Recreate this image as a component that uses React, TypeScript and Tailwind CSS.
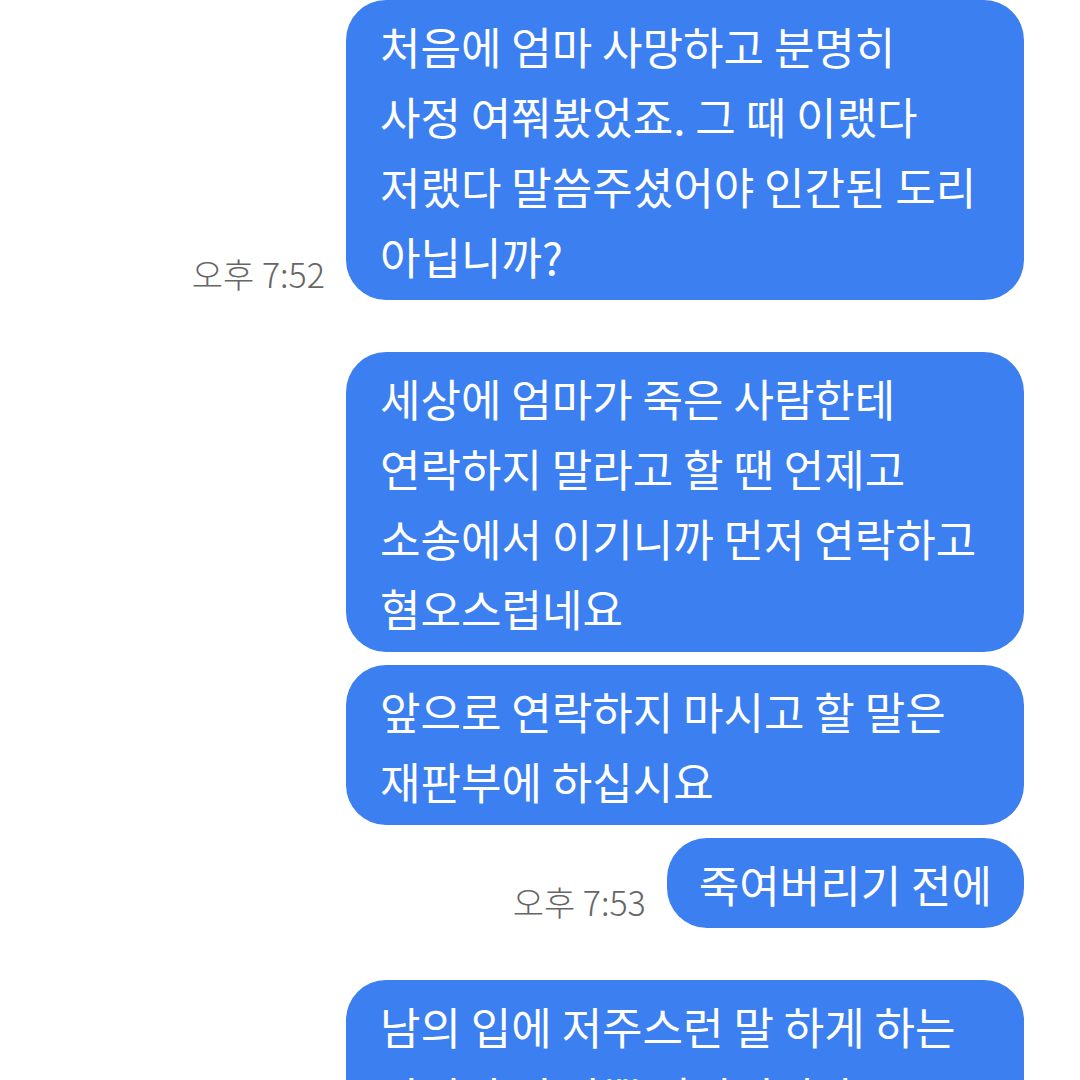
const font = { fontFamily: '"Noto Sans CJK KR", "Noto Sans", sans-serif' };

type Msg = { lines: string[]; time?: string; gapTop: string; wide: boolean };

const messages: Msg[] = [
	{
		lines: ["처음에 엄마 사망하고 분명히", "사정 여쭤봤었죠. 그 때 이랬다", "저랬다 말씀주셨어야 인간된 도리", "아닙니까?"],
		time: "오후 7:52",
		gapTop: "mt-0",
		wide: true,
	},
	{
		lines: ["세상에 엄마가 죽은 사람한테", "연락하지 말라고 할 땐 언제고", "소송에서 이기니까 먼저 연락하고", "혐오스럽네요"],
		gapTop: "mt-[52px]",
		wide: true,
	},
	{
		lines: ["앞으로 연락하지 마시고 할 말은", "재판부에 하십시요"],
		gapTop: "mt-[13px]",
		wide: true,
	},
	{
		lines: ["죽여버리기 전에"],
		time: "오후 7:53",
		gapTop: "mt-[13px]",
		wide: false,
	},
	{
		lines: ["남의 입에 저주스런 말 하게 하는", "당신이 더 나쁜 사람입니다"],
		gapTop: "mt-[52px]",
		wide: true,
	},
];

function Bubble({ msg }: { msg: Msg }) {
	return (
		<div className={`flex items-end justify-end gap-[21px] ${msg.gapTop}`}>
			{msg.time && (
				<span className="mb-[6px] text-[34px] leading-[40px] font-light text-[#666666]" style={font}>
					{msg.time}
				</span>
			)}
			<div
				className={`bg-[#3c7ff0] text-white text-[44px] leading-[70px] rounded-[40px] pt-[11px] pb-[9px] ${
					msg.wide ? "w-[678px] px-[34px]" : "px-[32px]"
				}`}
				style={font}
			>
				{msg.lines.map((l, i) => (
					<div key={i} className="whitespace-nowrap">
						{l}
					</div>
				))}
			</div>
		</div>
	);
}

export default function App() {
	return (
		<div className="w-[1080px] h-[1080px] overflow-hidden bg-white">
			<div className="flex flex-col pr-[56px]">
				{messages.map((m, i) => (
					<Bubble key={i} msg={m} />
				))}
			</div>
		</div>
	);
}
